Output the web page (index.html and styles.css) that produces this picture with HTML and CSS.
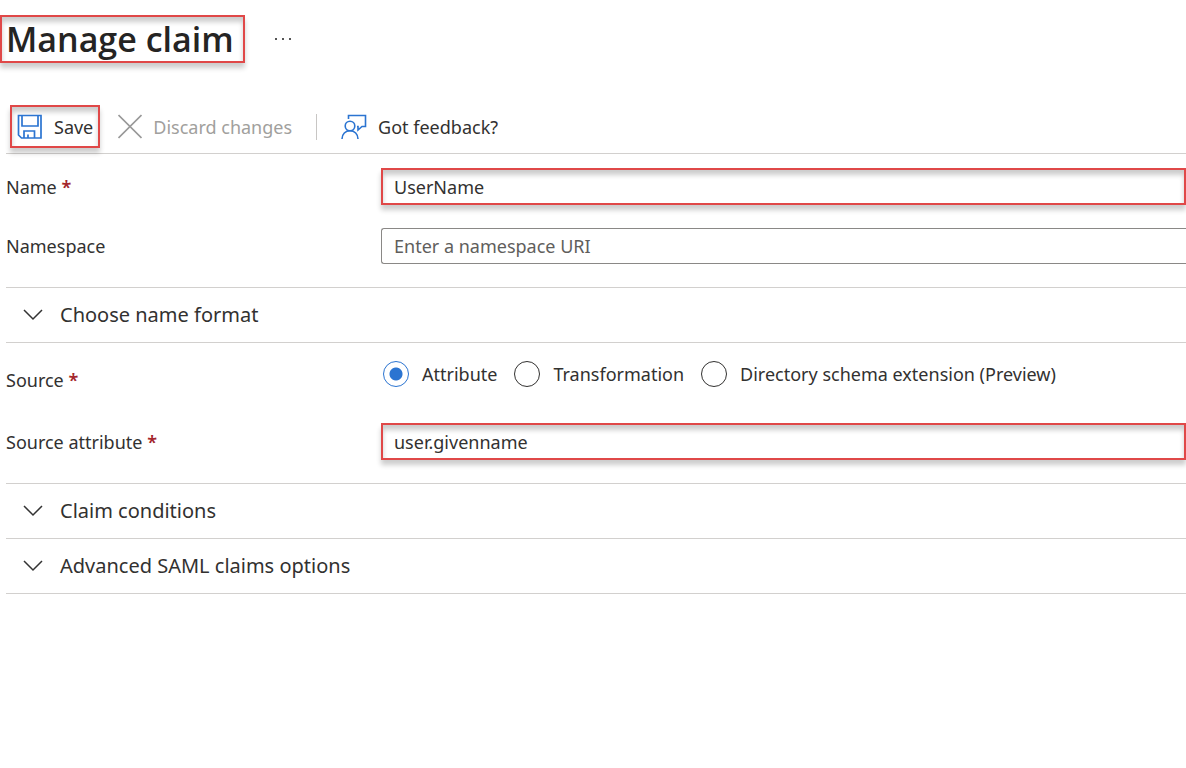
FILE: index.html
```
<!DOCTYPE html>
<html lang="en">
<head>
    <meta charset="UTF-8">
    <meta name="viewport" content="width=device-width, initial-scale=1.0">
    <title>Manage claim</title>
    <link rel="stylesheet" href="styles.css">
</head>
<body>

<header class="page-header">
    <h1 class="highlight">Manage claim</h1>
    <button type="button" class="more-btn" aria-label="More options">
        <svg width="18" height="4" viewBox="0 0 18 4"><path d="M1 1h2v2H1zM8 1h2v2H8zM15 1h2v2h-2z" fill="#555"/></svg>
    </button>
</header>

<!-- Command bar -->
<div class="toolbar">
    <button type="submit" form="claimForm" class="tool-btn save-btn highlight">
        <svg width="26" height="26" viewBox="0 0 26 26" fill="none" stroke="#2b74d1" stroke-width="1.7">
            <path d="M1.5 1.5h22.5v22.5H4.5l-3-3z"/>
            <path d="M5 1.5v10.5h16V1.5"/>
            <path d="M7 24v-7h10.500v7M11 24v-3.500"/>
        </svg>
        Save
    </button>
    <button type="button" class="tool-btn discard-btn" disabled>
        <svg width="24" height="26" viewBox="0 0 24 26" fill="none" stroke="#999" stroke-width="1.7">
            <path d="M.5 1l23 23M23.500 1L.5 24"/>
        </svg>
        Discard changes
    </button>
    <span class="separator"></span>
    <button type="button" class="tool-btn feedback-btn">
        <svg width="26" height="26" viewBox="0 0 26 26" fill="none" stroke="#2b74d1" stroke-width="1.6">
            <circle cx="9" cy="12" r="4.800"/>
            <path d="M1 25c0-5 3.500-8.200 8-8.200s8 3.200 8 8.200"/>
            <path d="M7.500 5V1.500H24.500v11h-3.500l-4 3.500v-3.500h-1"/>
        </svg>
        Got feedback?
    </button>
</div>

<form class="claim-form" id="claimForm">
    <div class="form-group">
        <label for="claimName">Name <span class="required">*</span></label>
        <input type="text" class="text-input highlight" id="claimName" name="claimName" value="UserName" required>
    </div>
    <div class="form-group">
        <label for="claimNamespace">Namespace</label>
        <input type="text" class="text-input" id="claimNamespace" name="claimNamespace" placeholder="Enter a namespace URI">
    </div>

    <div class="sections">
        <button type="button" class="section-btn" aria-expanded="false">
            <svg width="20" height="12" viewBox="0 0 20 12" fill="none" stroke="#333" stroke-width="1.5"><path d="M1 1l9 9 9-9"/></svg>
            Choose name format
        </button>
    </div>

    <div class="form-group source-group" role="radiogroup" aria-labelledby="sourceLabel">
        <span class="group-label" id="sourceLabel">Source <span class="required">*</span></span>
        <div class="radio-list">
            <label><input type="radio" name="source" value="attribute" checked>Attribute</label>
            <label><input type="radio" name="source" value="transformation">Transformation</label>
            <label><input type="radio" name="source" value="extension">Directory schema extension (Preview)</label>
        </div>
    </div>
    <div class="form-group">
        <label for="sourceAttribute">Source attribute <span class="required">*</span></label>
        <input type="text" class="text-input highlight" id="sourceAttribute" name="sourceAttribute" value="user.givenname" required>
    </div>

    <div class="sections">
        <button type="button" class="section-btn" aria-expanded="false">
            <svg width="20" height="12" viewBox="0 0 20 12" fill="none" stroke="#333" stroke-width="1.5"><path d="M1 1l9 9 9-9"/></svg>
            Claim conditions
        </button>
        <button type="button" class="section-btn" aria-expanded="false">
            <svg width="20" height="12" viewBox="0 0 20 12" fill="none" stroke="#333" stroke-width="1.5"><path d="M1 1l9 9 9-9"/></svg>
            Advanced SAML claims options
        </button>
    </div>
</form>

</body>
</html>
```
FILE: styles.css
```
* {
    box-sizing: border-box;
}

body {
    margin: 0;
    font-family: 'Segoe UI', 'Noto Sans', 'Open Sans', sans-serif;
    font-size: 18px;
    line-height: 26px;
    background-color: #fff;
    color: #323130;
}

button, input {
    font: inherit;
    color: inherit;
}

button {
    background: none;
    border: none;
    padding: 0;
    cursor: pointer;
}

svg {
    flex: none;
}

/* Red frame with a soft shadow */
.highlight {
    border: 2px solid #e04848;
    box-shadow: 0 5px 5px rgba(0, 0, 0, 0.2), inset 0 5px 5px rgba(0, 0, 0, 0.2);
}

/* Header */
.page-header {
    display: flex;
    align-items: center;
    gap: 29px;
    padding-top: 15px;
}

.page-header h1 {
    margin: 0;
    padding: 0 9px 0 4px;
    font-family: 'Segoe UI', 'Open Sans', sans-serif;
    font-size: 34px;
    line-height: 44px;
    font-weight: 600;
    color: #252423;
}

.more-btn {
    display: flex;
}

/* Command bar */
.toolbar {
    display: flex;
    align-items: center;
    margin: 42px 0 0 6px;
    padding: 0 0 5px 4px;
    border-bottom: 1px solid #d2d0ce;
}

.tool-btn {
    display: flex;
    align-items: center;
    gap: 11px;
    height: 43px;
    white-space: nowrap;
}

.save-btn {
    padding: 0 5px;
}

.discard-btn {
    margin-left: 18px;
    color: #a19f9d;
    cursor: default;
}

.separator {
    width: 1px;
    height: 26px;
    margin: 0 24px;
    background-color: #c8c6c4;
}

/* Form */
.claim-form {
    padding: 14px 0 0 6px;
}

.form-group {
    display: grid;
    grid-template-columns: 375px 1fr;
    align-items: center;
    margin-bottom: 23px;
}

.required {
    color: #a4262c;
    font-weight: 600;
}

.text-input {
    width: 100%;
    height: 36px;
    padding: 0 12px;
    border: 1px solid #8a8886;
    border-right: none;
    border-radius: 3px 0 0 3px;
    outline: none;
}

.text-input.highlight {
    height: 37px;
    padding: 0 11px;
    border: 2px solid #e04848;
    border-radius: 0;
}

.text-input::placeholder {
    color: #605e5c;
    opacity: 1;
}

/* Source options */
.source-group {
    align-items: end;
    margin-top: 18px;
    margin-bottom: 30px;
}

.radio-list {
    display: flex;
    flex-wrap: wrap;
    gap: 17px;
    padding: 0 0 6px 2px;
}

.radio-list label {
    display: flex;
    align-items: center;
    gap: 13px;
}

.radio-list input {
    appearance: none;
    flex: none;
    width: 26px;
    height: 26px;
    margin: 0;
    border: 1px solid #323130;
    border-radius: 50%;
}

.radio-list input:checked {
    border-color: #2b74d1;
    background: radial-gradient(circle, #2b74d1 6px, transparent 7px);
}

/* Collapsed sections */
.sections {
    border-top: 1px solid #d2d0ce;
}

.section-btn {
    display: flex;
    align-items: center;
    gap: 17px;
    width: 100%;
    height: 55px;
    padding-left: 17px;
    border-bottom: 1px solid #d2d0ce;
    font-size: 20px;
    text-align: left;
}
```
